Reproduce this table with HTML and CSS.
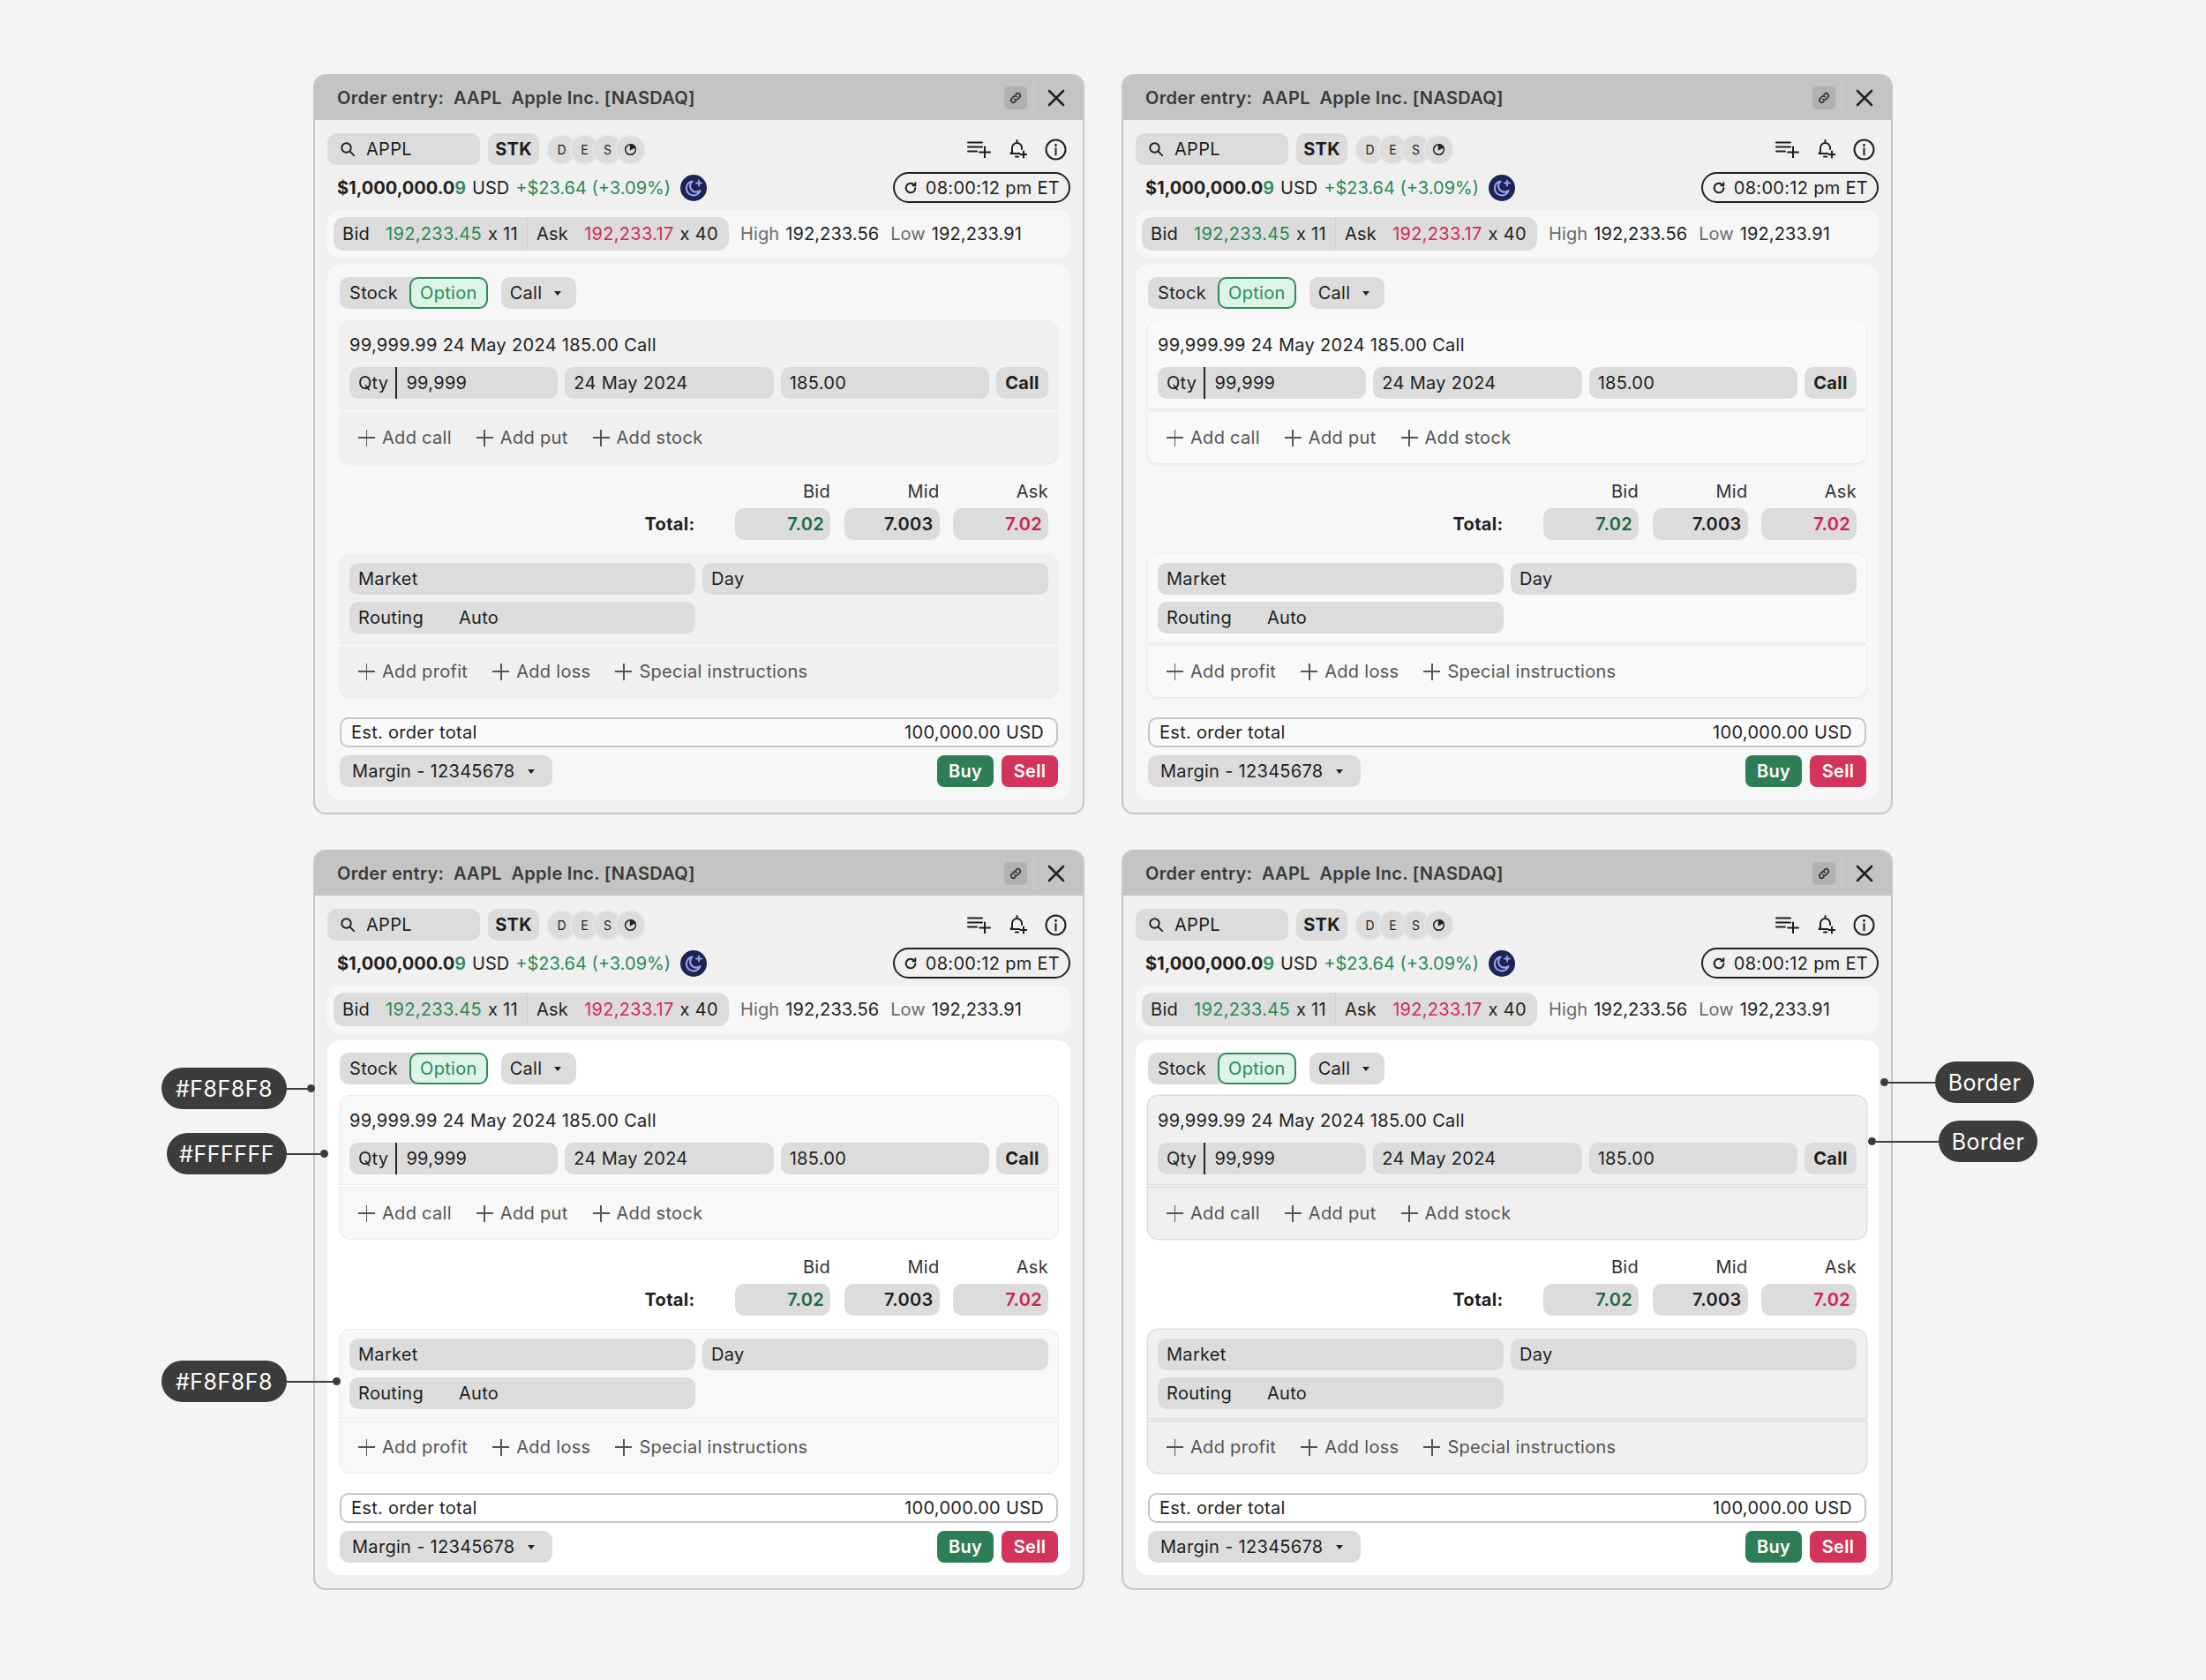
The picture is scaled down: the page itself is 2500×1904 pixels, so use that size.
FILE: index.html
```html
<!DOCTYPE html>
<html lang="en">
<head>
<meta charset="utf-8">
<title>Order entry variants</title>
<link rel="stylesheet" href="styles.css">
</head>
<body>
<main class="page">

<!-- PANEL A -->
<section class="panel v-a">
  <header class="ph">
    <div class="ph-title">Order entry:&nbsp; AAPL&nbsp; Apple Inc. [NASDAQ]</div>
    <div class="ph-actions">
      <span class="ph-link"><svg width="16" height="16" viewBox="0 0 24 24" fill="none" stroke="#333" stroke-width="2.4" stroke-linecap="round"><path d="M10 14a4 4 0 0 0 5.66 0l3-3a4 4 0 0 0-5.66-5.66l-1 1"/><path d="M14 10a4 4 0 0 0-5.66 0l-3 3a4 4 0 0 0 5.66 5.66l1-1"/></svg></span>
      <span class="ph-sep"></span>
      <span class="ph-close"><svg width="20" height="20" viewBox="0 0 20 20" stroke="#222" stroke-width="2.6" stroke-linecap="round"><path d="M2 2L18 18M18 2L2 18"/></svg></span>
    </div>
  </header>
  <div class="pb">
    <div class="row1">
      <div class="search"><svg width="18" height="18" viewBox="0 0 24 24" fill="none" stroke="#222" stroke-width="2.6" stroke-linecap="round"><circle cx="10" cy="10" r="7"/><path d="M15.5 15.5L21.5 21.5"/></svg><span>APPL</span></div>
      <div class="stk">STK</div>
      <div class="deso"><span>D</span><span>E</span><span>S</span><span><svg width="15" height="15" viewBox="0 0 16 16" fill="none" stroke="#222" stroke-width="1.6"><circle cx="8" cy="8" r="6.2"/><path d="M8 8V1.8A6.2 6.2 0 0 1 13.4 5Z" fill="#222"/></svg></span></div>
      <div class="tools">
        <svg width="27" height="19" viewBox="0 0 27 19" fill="none" stroke="#1e1e1e" stroke-width="2" stroke-linecap="round"><path d="M1 1.5H17M1 6.5H17M1 11.5H11M20 6.5V18.5M14 12.5H26"/></svg>
        <svg width="21" height="22" viewBox="0 0 21 22" fill="none" stroke="#1e1e1e" stroke-width="2" stroke-linecap="round" stroke-linejoin="round"><path d="M9.5 1V3"/><path d="M12.5 16H2.5L4 14.2V9.5a5.5 5.5 0 0 1 11 0V11"/><path d="M8 19.5h3"/><path d="M17 13.5V20.5M13.5 17H20.5"/></svg>
        <svg width="25" height="25" viewBox="0 0 25 25" fill="none" stroke="#1e1e1e" stroke-width="2"><circle cx="12.5" cy="12.5" r="11"/><path d="M12.5 11V18.5" stroke-linecap="round"/><circle cx="12.5" cy="7.5" r="0.6" fill="#1e1e1e" stroke-width="1.6"/></svg>
      </div>
    </div>
    <div class="row2">
      <div class="bal"><b>$1,000,000.0<span class="gn">9</span></b><span class="usd">USD</span><span class="gn chg">+$23.64 (+3.09%)</span><span class="moon"><svg width="30" height="30" viewBox="0 0 30 30"><circle cx="15" cy="15" r="15" fill="#1c2452"/><path d="M13.5 7.5a8 8 0 1 0 9 10.5a6.3 6.3 0 0 1-9-10.5z" fill="none" stroke="#9aa4f2" stroke-width="2.2" stroke-linejoin="round"/><path d="M21 6.5V12.5M18 9.5H24" stroke="#9aa4f2" stroke-width="1.8" stroke-linecap="round"/></svg></span></div>
      <div class="time"><svg width="16" height="16" viewBox="0 0 24 24" fill="none" stroke="#1e1e1e" stroke-width="3" stroke-linecap="round" stroke-linejoin="round"><path d="M20 12a8 8 0 1 1-2.5-5.8"/><path d="M20 3.5V8h-4.5"/></svg><span>08:00:12 pm ET</span></div>
    </div>
    <div class="quotes">
      <div class="ba">
        <span class="q q1"><span class="ql">Bid</span><span class="gn">192,233.45</span><span class="qx">x 11</span></span>
        <span class="q"><span class="ql">Ask</span><span class="rd">192,233.17</span><span class="qx">x 40</span></span>
      </div>
      <span class="hl"><span class="lbl">High</span>192,233.56</span>
      <span class="hl"><span class="lbl">Low</span>192,233.91</span>
    </div>
    <div class="card">
      <div class="segrow">
        <div class="seg"><span class="seg-off">Stock</span><span class="seg-on">Option</span></div>
        <div class="dd dd-call">Call<i class="caret"></i></div>
      </div>
      <div class="grp">
        <div class="box top leg">
          <div class="leg-title">99,999.99 24 May 2024 185.00 Call</div>
          <div class="leg-inputs">
            <div class="inp qty"><span class="qtyl">Qty</span><span class="qtyv">99,999</span></div>
            <div class="inp">24 May 2024</div>
            <div class="inp">185.00</div>
            <div class="inp callb">Call</div>
          </div>
        </div>
        <div class="box bot adds">
          <span class="add"><i class="plus"></i>Add call</span>
          <span class="add"><i class="plus"></i>Add put</span>
          <span class="add"><i class="plus"></i>Add stock</span>
        </div>
      </div>
      <div class="totals">
        <span class="th c2">Bid</span><span class="th c3">Mid</span><span class="th c4">Ask</span>
        <span class="tl">Total:</span><span class="tv tg">7.02</span><span class="tv">7.003</span><span class="tv tr">7.02</span>
      </div>
      <div class="grp grp2">
        <div class="box top ord">
          <div class="inp">Market</div>
          <div class="inp">Day</div>
          <div class="inp"><span class="rl">Routing</span>Auto</div>
        </div>
        <div class="box bot adds">
          <span class="add"><i class="plus"></i>Add profit</span>
          <span class="add"><i class="plus"></i>Add loss</span>
          <span class="add"><i class="plus"></i>Special instructions</span>
        </div>
      </div>
      <div class="est"><span>Est. order total</span><span>100,000.00 USD</span></div>
      <div class="foot">
        <div class="dd dd-margin">Margin - 12345678<i class="caret"></i></div>
        <div class="bs"><span class="btn buy">Buy</span><span class="btn sell">Sell</span></div>
      </div>
    </div>
  </div>
</section>

<!-- PANEL B -->
<section class="panel v-b">
  <header class="ph">
    <div class="ph-title">Order entry:&nbsp; AAPL&nbsp; Apple Inc. [NASDAQ]</div>
    <div class="ph-actions">
      <span class="ph-link"><svg width="16" height="16" viewBox="0 0 24 24" fill="none" stroke="#333" stroke-width="2.4" stroke-linecap="round"><path d="M10 14a4 4 0 0 0 5.66 0l3-3a4 4 0 0 0-5.66-5.66l-1 1"/><path d="M14 10a4 4 0 0 0-5.66 0l-3 3a4 4 0 0 0 5.66 5.66l1-1"/></svg></span>
      <span class="ph-sep"></span>
      <span class="ph-close"><svg width="20" height="20" viewBox="0 0 20 20" stroke="#222" stroke-width="2.6" stroke-linecap="round"><path d="M2 2L18 18M18 2L2 18"/></svg></span>
    </div>
  </header>
  <div class="pb">
    <div class="row1">
      <div class="search"><svg width="18" height="18" viewBox="0 0 24 24" fill="none" stroke="#222" stroke-width="2.6" stroke-linecap="round"><circle cx="10" cy="10" r="7"/><path d="M15.5 15.5L21.5 21.5"/></svg><span>APPL</span></div>
      <div class="stk">STK</div>
      <div class="deso"><span>D</span><span>E</span><span>S</span><span><svg width="15" height="15" viewBox="0 0 16 16" fill="none" stroke="#222" stroke-width="1.6"><circle cx="8" cy="8" r="6.2"/><path d="M8 8V1.8A6.2 6.2 0 0 1 13.4 5Z" fill="#222"/></svg></span></div>
      <div class="tools">
        <svg width="27" height="19" viewBox="0 0 27 19" fill="none" stroke="#1e1e1e" stroke-width="2" stroke-linecap="round"><path d="M1 1.5H17M1 6.5H17M1 11.5H11M20 6.5V18.5M14 12.5H26"/></svg>
        <svg width="21" height="22" viewBox="0 0 21 22" fill="none" stroke="#1e1e1e" stroke-width="2" stroke-linecap="round" stroke-linejoin="round"><path d="M9.5 1V3"/><path d="M12.5 16H2.5L4 14.2V9.5a5.5 5.5 0 0 1 11 0V11"/><path d="M8 19.5h3"/><path d="M17 13.5V20.5M13.5 17H20.5"/></svg>
        <svg width="25" height="25" viewBox="0 0 25 25" fill="none" stroke="#1e1e1e" stroke-width="2"><circle cx="12.5" cy="12.5" r="11"/><path d="M12.5 11V18.5" stroke-linecap="round"/><circle cx="12.5" cy="7.5" r="0.6" fill="#1e1e1e" stroke-width="1.6"/></svg>
      </div>
    </div>
    <div class="row2">
      <div class="bal"><b>$1,000,000.0<span class="gn">9</span></b><span class="usd">USD</span><span class="gn chg">+$23.64 (+3.09%)</span><span class="moon"><svg width="30" height="30" viewBox="0 0 30 30"><circle cx="15" cy="15" r="15" fill="#1c2452"/><path d="M13.5 7.5a8 8 0 1 0 9 10.5a6.3 6.3 0 0 1-9-10.5z" fill="none" stroke="#9aa4f2" stroke-width="2.2" stroke-linejoin="round"/><path d="M21 6.5V12.5M18 9.5H24" stroke="#9aa4f2" stroke-width="1.8" stroke-linecap="round"/></svg></span></div>
      <div class="time"><svg width="16" height="16" viewBox="0 0 24 24" fill="none" stroke="#1e1e1e" stroke-width="3" stroke-linecap="round" stroke-linejoin="round"><path d="M20 12a8 8 0 1 1-2.5-5.8"/><path d="M20 3.5V8h-4.5"/></svg><span>08:00:12 pm ET</span></div>
    </div>
    <div class="quotes">
      <div class="ba">
        <span class="q q1"><span class="ql">Bid</span><span class="gn">192,233.45</span><span class="qx">x 11</span></span>
        <span class="q"><span class="ql">Ask</span><span class="rd">192,233.17</span><span class="qx">x 40</span></span>
      </div>
      <span class="hl"><span class="lbl">High</span>192,233.56</span>
      <span class="hl"><span class="lbl">Low</span>192,233.91</span>
    </div>
    <div class="card">
      <div class="segrow">
        <div class="seg"><span class="seg-off">Stock</span><span class="seg-on">Option</span></div>
        <div class="dd dd-call">Call<i class="caret"></i></div>
      </div>
      <div class="grp">
        <div class="box top leg">
          <div class="leg-title">99,999.99 24 May 2024 185.00 Call</div>
          <div class="leg-inputs">
            <div class="inp qty"><span class="qtyl">Qty</span><span class="qtyv">99,999</span></div>
            <div class="inp">24 May 2024</div>
            <div class="inp">185.00</div>
            <div class="inp callb">Call</div>
          </div>
        </div>
        <div class="box bot adds">
          <span class="add"><i class="plus"></i>Add call</span>
          <span class="add"><i class="plus"></i>Add put</span>
          <span class="add"><i class="plus"></i>Add stock</span>
        </div>
      </div>
      <div class="totals">
        <span class="th c2">Bid</span><span class="th c3">Mid</span><span class="th c4">Ask</span>
        <span class="tl">Total:</span><span class="tv tg">7.02</span><span class="tv">7.003</span><span class="tv tr">7.02</span>
      </div>
      <div class="grp grp2">
        <div class="box top ord">
          <div class="inp">Market</div>
          <div class="inp">Day</div>
          <div class="inp"><span class="rl">Routing</span>Auto</div>
        </div>
        <div class="box bot adds">
          <span class="add"><i class="plus"></i>Add profit</span>
          <span class="add"><i class="plus"></i>Add loss</span>
          <span class="add"><i class="plus"></i>Special instructions</span>
        </div>
      </div>
      <div class="est"><span>Est. order total</span><span>100,000.00 USD</span></div>
      <div class="foot">
        <div class="dd dd-margin">Margin - 12345678<i class="caret"></i></div>
        <div class="bs"><span class="btn buy">Buy</span><span class="btn sell">Sell</span></div>
      </div>
    </div>
  </div>
</section>

<!-- PANEL C -->
<section class="panel v-c">
  <header class="ph">
    <div class="ph-title">Order entry:&nbsp; AAPL&nbsp; Apple Inc. [NASDAQ]</div>
    <div class="ph-actions">
      <span class="ph-link"><svg width="16" height="16" viewBox="0 0 24 24" fill="none" stroke="#333" stroke-width="2.4" stroke-linecap="round"><path d="M10 14a4 4 0 0 0 5.66 0l3-3a4 4 0 0 0-5.66-5.66l-1 1"/><path d="M14 10a4 4 0 0 0-5.66 0l-3 3a4 4 0 0 0 5.66 5.66l1-1"/></svg></span>
      <span class="ph-sep"></span>
      <span class="ph-close"><svg width="20" height="20" viewBox="0 0 20 20" stroke="#222" stroke-width="2.6" stroke-linecap="round"><path d="M2 2L18 18M18 2L2 18"/></svg></span>
    </div>
  </header>
  <div class="pb">
    <div class="row1">
      <div class="search"><svg width="18" height="18" viewBox="0 0 24 24" fill="none" stroke="#222" stroke-width="2.6" stroke-linecap="round"><circle cx="10" cy="10" r="7"/><path d="M15.5 15.5L21.5 21.5"/></svg><span>APPL</span></div>
      <div class="stk">STK</div>
      <div class="deso"><span>D</span><span>E</span><span>S</span><span><svg width="15" height="15" viewBox="0 0 16 16" fill="none" stroke="#222" stroke-width="1.6"><circle cx="8" cy="8" r="6.2"/><path d="M8 8V1.8A6.2 6.2 0 0 1 13.4 5Z" fill="#222"/></svg></span></div>
      <div class="tools">
        <svg width="27" height="19" viewBox="0 0 27 19" fill="none" stroke="#1e1e1e" stroke-width="2" stroke-linecap="round"><path d="M1 1.5H17M1 6.5H17M1 11.5H11M20 6.5V18.5M14 12.5H26"/></svg>
        <svg width="21" height="22" viewBox="0 0 21 22" fill="none" stroke="#1e1e1e" stroke-width="2" stroke-linecap="round" stroke-linejoin="round"><path d="M9.5 1V3"/><path d="M12.5 16H2.5L4 14.2V9.5a5.5 5.5 0 0 1 11 0V11"/><path d="M8 19.5h3"/><path d="M17 13.5V20.5M13.5 17H20.5"/></svg>
        <svg width="25" height="25" viewBox="0 0 25 25" fill="none" stroke="#1e1e1e" stroke-width="2"><circle cx="12.5" cy="12.5" r="11"/><path d="M12.5 11V18.5" stroke-linecap="round"/><circle cx="12.5" cy="7.5" r="0.6" fill="#1e1e1e" stroke-width="1.6"/></svg>
      </div>
    </div>
    <div class="row2">
      <div class="bal"><b>$1,000,000.0<span class="gn">9</span></b><span class="usd">USD</span><span class="gn chg">+$23.64 (+3.09%)</span><span class="moon"><svg width="30" height="30" viewBox="0 0 30 30"><circle cx="15" cy="15" r="15" fill="#1c2452"/><path d="M13.5 7.5a8 8 0 1 0 9 10.5a6.3 6.3 0 0 1-9-10.5z" fill="none" stroke="#9aa4f2" stroke-width="2.2" stroke-linejoin="round"/><path d="M21 6.5V12.5M18 9.5H24" stroke="#9aa4f2" stroke-width="1.8" stroke-linecap="round"/></svg></span></div>
      <div class="time"><svg width="16" height="16" viewBox="0 0 24 24" fill="none" stroke="#1e1e1e" stroke-width="3" stroke-linecap="round" stroke-linejoin="round"><path d="M20 12a8 8 0 1 1-2.5-5.8"/><path d="M20 3.5V8h-4.5"/></svg><span>08:00:12 pm ET</span></div>
    </div>
    <div class="quotes">
      <div class="ba">
        <span class="q q1"><span class="ql">Bid</span><span class="gn">192,233.45</span><span class="qx">x 11</span></span>
        <span class="q"><span class="ql">Ask</span><span class="rd">192,233.17</span><span class="qx">x 40</span></span>
      </div>
      <span class="hl"><span class="lbl">High</span>192,233.56</span>
      <span class="hl"><span class="lbl">Low</span>192,233.91</span>
    </div>
    <div class="card">
      <div class="segrow">
        <div class="seg"><span class="seg-off">Stock</span><span class="seg-on">Option</span></div>
        <div class="dd dd-call">Call<i class="caret"></i></div>
      </div>
      <div class="grp">
        <div class="box top leg">
          <div class="leg-title">99,999.99 24 May 2024 185.00 Call</div>
          <div class="leg-inputs">
            <div class="inp qty"><span class="qtyl">Qty</span><span class="qtyv">99,999</span></div>
            <div class="inp">24 May 2024</div>
            <div class="inp">185.00</div>
            <div class="inp callb">Call</div>
          </div>
        </div>
        <div class="box bot adds">
          <span class="add"><i class="plus"></i>Add call</span>
          <span class="add"><i class="plus"></i>Add put</span>
          <span class="add"><i class="plus"></i>Add stock</span>
        </div>
      </div>
      <div class="totals">
        <span class="th c2">Bid</span><span class="th c3">Mid</span><span class="th c4">Ask</span>
        <span class="tl">Total:</span><span class="tv tg">7.02</span><span class="tv">7.003</span><span class="tv tr">7.02</span>
      </div>
      <div class="grp grp2">
        <div class="box top ord">
          <div class="inp">Market</div>
          <div class="inp">Day</div>
          <div class="inp"><span class="rl">Routing</span>Auto</div>
        </div>
        <div class="box bot adds">
          <span class="add"><i class="plus"></i>Add profit</span>
          <span class="add"><i class="plus"></i>Add loss</span>
          <span class="add"><i class="plus"></i>Special instructions</span>
        </div>
      </div>
      <div class="est"><span>Est. order total</span><span>100,000.00 USD</span></div>
      <div class="foot">
        <div class="dd dd-margin">Margin - 12345678<i class="caret"></i></div>
        <div class="bs"><span class="btn buy">Buy</span><span class="btn sell">Sell</span></div>
      </div>
    </div>
  </div>
</section>

<!-- PANEL D -->
<section class="panel v-d">
  <header class="ph">
    <div class="ph-title">Order entry:&nbsp; AAPL&nbsp; Apple Inc. [NASDAQ]</div>
    <div class="ph-actions">
      <span class="ph-link"><svg width="16" height="16" viewBox="0 0 24 24" fill="none" stroke="#333" stroke-width="2.4" stroke-linecap="round"><path d="M10 14a4 4 0 0 0 5.66 0l3-3a4 4 0 0 0-5.66-5.66l-1 1"/><path d="M14 10a4 4 0 0 0-5.66 0l-3 3a4 4 0 0 0 5.66 5.66l1-1"/></svg></span>
      <span class="ph-sep"></span>
      <span class="ph-close"><svg width="20" height="20" viewBox="0 0 20 20" stroke="#222" stroke-width="2.6" stroke-linecap="round"><path d="M2 2L18 18M18 2L2 18"/></svg></span>
    </div>
  </header>
  <div class="pb">
    <div class="row1">
      <div class="search"><svg width="18" height="18" viewBox="0 0 24 24" fill="none" stroke="#222" stroke-width="2.6" stroke-linecap="round"><circle cx="10" cy="10" r="7"/><path d="M15.5 15.5L21.5 21.5"/></svg><span>APPL</span></div>
      <div class="stk">STK</div>
      <div class="deso"><span>D</span><span>E</span><span>S</span><span><svg width="15" height="15" viewBox="0 0 16 16" fill="none" stroke="#222" stroke-width="1.6"><circle cx="8" cy="8" r="6.2"/><path d="M8 8V1.8A6.2 6.2 0 0 1 13.4 5Z" fill="#222"/></svg></span></div>
      <div class="tools">
        <svg width="27" height="19" viewBox="0 0 27 19" fill="none" stroke="#1e1e1e" stroke-width="2" stroke-linecap="round"><path d="M1 1.5H17M1 6.5H17M1 11.5H11M20 6.5V18.5M14 12.5H26"/></svg>
        <svg width="21" height="22" viewBox="0 0 21 22" fill="none" stroke="#1e1e1e" stroke-width="2" stroke-linecap="round" stroke-linejoin="round"><path d="M9.5 1V3"/><path d="M12.5 16H2.5L4 14.2V9.5a5.5 5.5 0 0 1 11 0V11"/><path d="M8 19.5h3"/><path d="M17 13.5V20.5M13.5 17H20.5"/></svg>
        <svg width="25" height="25" viewBox="0 0 25 25" fill="none" stroke="#1e1e1e" stroke-width="2"><circle cx="12.5" cy="12.5" r="11"/><path d="M12.5 11V18.5" stroke-linecap="round"/><circle cx="12.5" cy="7.5" r="0.6" fill="#1e1e1e" stroke-width="1.6"/></svg>
      </div>
    </div>
    <div class="row2">
      <div class="bal"><b>$1,000,000.0<span class="gn">9</span></b><span class="usd">USD</span><span class="gn chg">+$23.64 (+3.09%)</span><span class="moon"><svg width="30" height="30" viewBox="0 0 30 30"><circle cx="15" cy="15" r="15" fill="#1c2452"/><path d="M13.5 7.5a8 8 0 1 0 9 10.5a6.3 6.3 0 0 1-9-10.5z" fill="none" stroke="#9aa4f2" stroke-width="2.2" stroke-linejoin="round"/><path d="M21 6.5V12.5M18 9.5H24" stroke="#9aa4f2" stroke-width="1.8" stroke-linecap="round"/></svg></span></div>
      <div class="time"><svg width="16" height="16" viewBox="0 0 24 24" fill="none" stroke="#1e1e1e" stroke-width="3" stroke-linecap="round" stroke-linejoin="round"><path d="M20 12a8 8 0 1 1-2.5-5.8"/><path d="M20 3.5V8h-4.5"/></svg><span>08:00:12 pm ET</span></div>
    </div>
    <div class="quotes">
      <div class="ba">
        <span class="q q1"><span class="ql">Bid</span><span class="gn">192,233.45</span><span class="qx">x 11</span></span>
        <span class="q"><span class="ql">Ask</span><span class="rd">192,233.17</span><span class="qx">x 40</span></span>
      </div>
      <span class="hl"><span class="lbl">High</span>192,233.56</span>
      <span class="hl"><span class="lbl">Low</span>192,233.91</span>
    </div>
    <div class="card">
      <div class="segrow">
        <div class="seg"><span class="seg-off">Stock</span><span class="seg-on">Option</span></div>
        <div class="dd dd-call">Call<i class="caret"></i></div>
      </div>
      <div class="grp">
        <div class="box top leg">
          <div class="leg-title">99,999.99 24 May 2024 185.00 Call</div>
          <div class="leg-inputs">
            <div class="inp qty"><span class="qtyl">Qty</span><span class="qtyv">99,999</span></div>
            <div class="inp">24 May 2024</div>
            <div class="inp">185.00</div>
            <div class="inp callb">Call</div>
          </div>
        </div>
        <div class="box bot adds">
          <span class="add"><i class="plus"></i>Add call</span>
          <span class="add"><i class="plus"></i>Add put</span>
          <span class="add"><i class="plus"></i>Add stock</span>
        </div>
      </div>
      <div class="totals">
        <span class="th c2">Bid</span><span class="th c3">Mid</span><span class="th c4">Ask</span>
        <span class="tl">Total:</span><span class="tv tg">7.02</span><span class="tv">7.003</span><span class="tv tr">7.02</span>
      </div>
      <div class="grp grp2">
        <div class="box top ord">
          <div class="inp">Market</div>
          <div class="inp">Day</div>
          <div class="inp"><span class="rl">Routing</span>Auto</div>
        </div>
        <div class="box bot adds">
          <span class="add"><i class="plus"></i>Add profit</span>
          <span class="add"><i class="plus"></i>Add loss</span>
          <span class="add"><i class="plus"></i>Special instructions</span>
        </div>
      </div>
      <div class="est"><span>Est. order total</span><span>100,000.00 USD</span></div>
      <div class="foot">
        <div class="dd dd-margin">Margin - 12345678<i class="caret"></i></div>
        <div class="bs"><span class="btn buy">Buy</span><span class="btn sell">Sell</span></div>
      </div>
    </div>
  </div>
</section>

</main>

<div class="ann ann-l a1"><span class="pill">#F8F8F8</span><span class="ln"></span><span class="dot"></span></div>
<div class="ann ann-l a2"><span class="pill">#FFFFFF</span><span class="ln"></span><span class="dot"></span></div>
<div class="ann ann-l a3"><span class="pill">#F8F8F8</span><span class="ln"></span><span class="dot"></span></div>
<div class="ann ann-r a4"><span class="dot"></span><span class="ln"></span><span class="pill">Border</span></div>
<div class="ann ann-r a5"><span class="dot"></span><span class="ln"></span><span class="pill">Border</span></div>
</body>
</html>
```

FILE: styles.css
```css
* { box-sizing: border-box; margin: 0; padding: 0; }
html, body { width: 2500px; height: 1904px; }
body {
  background: #f4f4f4;
  font-family: Inter, "Noto Sans", sans-serif;
  font-size: 20px;
  letter-spacing: 0.3px;
  color: #1f1f1f;
  position: relative;
  overflow: hidden;
}
.page {
  display: grid;
  grid-template-columns: 874px 874px;
  column-gap: 42px;
  row-gap: 40px;
  justify-content: center;
  padding-top: 84px;
}

/* panel */
.panel {
  border: 2px solid #c6c6c6;
  border-radius: 14px;
  background: #f0f0f0;
  overflow: hidden;
}
.ph {
  height: 50px;
  background: #c4c4c4;
  display: flex;
  align-items: center;
  justify-content: space-between;
  padding: 0 20px 0 25px;
}
.ph-title { font-weight: 600; font-size: 20px; color: #3a3a3a; }
.ph-actions { display: flex; align-items: center; }
.ph-link {
  width: 26px; height: 26px; border-radius: 5px; background: #b1b1b1;
  display: flex; align-items: center; justify-content: center;
}
.ph-sep { width: 1px; height: 36px; background: #d0d0d0; margin: 0 15px 0 7px; }
.ph-close { display: flex; }

.pb { padding: 15px 14px; display: flex; flex-direction: column; gap: 8px; }

/* row 1 */
.row1 { height: 36px; display: flex; align-items: center; }
.search {
  width: 173px; height: 36px; background: #dcdcdc; border-radius: 10px;
  display: flex; align-items: center; gap: 12px; padding-left: 14px;
}
.stk {
  margin-left: 9px; width: 58px; height: 36px; background: #dcdcdc; border-radius: 10px;
  font-weight: 700; display: flex; align-items: center; justify-content: center;
}
.deso { margin-left: 10px; display: flex; }
.deso span {
  width: 31px; height: 31px; border-radius: 50%; background: #dcdcdc;
  box-shadow: 0 0 0 1.5px #e8e8e8; margin-left: -5px;
  display: flex; align-items: center; justify-content: center; font-size: 14px; letter-spacing: 0;
  position: relative;
}
.deso span:first-child { margin-left: 0; }
.tools { margin-left: auto; display: flex; align-items: center; gap: 20px; padding-right: 4px; }

/* row 2 */
.row2 { height: 35px; display: flex; align-items: center; justify-content: space-between; }
.bal { padding-left: 11px; display: flex; align-items: center; letter-spacing: 0; }
.bal b { font-weight: 700; }
.bal .gn { color: #2b8a57; }
.bal b .gn { font-weight: 600; }
.usd { margin-left: 7px; }
.chg { margin-left: 7px; }
.moon { margin-left: 11px; display: flex; }
.time {
  height: 35px; border: 2px solid #222; border-radius: 18px;
  display: flex; align-items: center; gap: 9px; padding: 0 10px 0 10px;
}

/* quotes */
.quotes {
  height: 54px; background: #f7f7f7; border-radius: 14px; padding: 0 7px;
  display: flex; align-items: center;
}
.ba { height: 38px; width: 448px; background: #dcdcdc; border-radius: 12px; display: flex; align-items: center; }
.q { display: flex; align-items: center; height: 100%; padding: 0 10px; }
.q1 { border-right: 1.5px solid #cfcfcf; }
.ql { margin-right: 18px; }
.qx { margin-left: 7px; }
.gn { color: #2b8a57; }
.rd { color: #d42a5b; }
.hl { margin-left: 13px; letter-spacing: 0.1px; }
.lbl { color: #6b6b6b; margin-right: 7px; }

/* card */
.card { border-radius: 14px; padding: 14px; display: flex; flex-direction: column; }
.segrow { height: 36px; display: flex; align-items: center; gap: 15px; }
.seg { height: 36px; background: #dcdcdc; border-radius: 10px; display: flex; align-items: center; }
.seg-off { padding: 0 13px 0 11px; }
.seg-on {
  height: 36px; padding: 0 10px; border: 2px solid #2e8b5a; border-radius: 10px;
  background: #ddf5e8; color: #2b8a57; display: flex; align-items: center;
}
.dd {
  height: 36px; background: #dcdcdc; border-radius: 10px; display: flex; align-items: center;
}
.dd-call { width: 85px; padding-left: 10px; }
.caret {
  display: inline-block; width: 0; height: 0;
  border-left: 4.5px solid transparent; border-right: 4.5px solid transparent; border-top: 5px solid #222;
}
.dd-call .caret { margin-left: 14px; }
.dd-margin { width: 241px; padding-left: 14px; }
.dd-margin .caret { margin-left: 14px; }

.grp { margin-top: 13px; display: flex; flex-direction: column; gap: 4px; }
.grp2 { margin-top: 16px; }
.box.top { border-radius: 12px 12px 0 0; }
.box.bot { border-radius: 0 0 12px 12px; }
.leg { padding: 16px 11px 11px; }
.leg-title { line-height: 24px; }
.leg-inputs { margin-top: 13px; display: grid; grid-template-columns: 1fr 1fr 1fr 59px; gap: 8px; }
.inp {
  height: 36px; background: #dcdcdc; border-radius: 10px; display: flex; align-items: center; padding-left: 10px;
}
.qty { padding-left: 0; }
.qtyl { padding: 0 8px 0 10px; height: 100%; display: flex; align-items: center; border-right: 2px solid #222; }
.qtyv { padding-left: 10px; }
.callb { font-weight: 700; padding-left: 0; justify-content: center; }

.adds { height: 58px; display: flex; align-items: center; padding-left: 21px; gap: 28px; color: #555; }
.add { display: flex; align-items: center; gap: 8px; }
.plus { display: inline-block; width: 19px; height: 19px; position: relative; }
.plus::before, .plus::after { content: ""; position: absolute; background: #555; }
.plus::before { left: 0; right: 0; top: 8.5px; height: 1.8px; }
.plus::after { top: 0; bottom: 0; left: 8.6px; width: 1.8px; }

.totals {
  margin-top: 21px; display: grid; grid-template-columns: 1fr 108px 108px 108px;
  grid-template-rows: 22px 36px; column-gap: 15.5px; row-gap: 8px; padding-right: 11px;
}
.th { text-align: right; line-height: 22px; color: #333; }
.c2 { grid-column: 2; } .c3 { grid-column: 3; } .c4 { grid-column: 4; }
.tl { grid-column: 1; grid-row: 2; justify-self: end; align-self: center; font-weight: 700; margin-right: 30px; }
.tv {
  grid-row: 2; background: #dcdcdc; border-radius: 10px; display: flex; align-items: center;
  justify-content: flex-end; padding-right: 7px; font-weight: 600;
}
.tg { color: #1f6a46; }
.tr { color: #d01f55; }

.ord { padding: 10px 11px; display: grid; grid-template-columns: 1fr 1fr; grid-template-rows: 36px 36px; gap: 8px; }
.rl { margin-right: 40px; }

.est {
  margin-top: 23px; height: 34px; border: 2px solid #c5c5c5; border-radius: 10px; background: #fafafa;
  display: flex; align-items: center; justify-content: space-between; padding: 0 14px 0 11px;
}
.foot { margin-top: 9px; height: 36px; display: flex; align-items: center; justify-content: space-between; }
.bs { display: flex; gap: 9px; }
.btn {
  width: 64px; height: 36px; border-radius: 8px; color: #fff; font-weight: 600;
  display: flex; align-items: center; justify-content: center;
}
.buy { background: #2d7e57; }
.sell { background: #d3345c; }

/* variants */
.v-a .card { background: #f7f7f7; }
.v-a .box { background: #f0f0f0; box-shadow: 0 1px 3px rgba(0,0,0,0.08); }
.v-b .card { background: #f7f7f7; }
.v-b .box { background: #f9f9f9; box-shadow: 0 1px 4px rgba(0,0,0,0.09); }
.v-c .card { background: #ffffff; }
.v-c .box { background: #f8f8f8; box-shadow: 0 0 0 1px #ececec; }
.v-c .est { background: #fff; }
.v-d .card { background: #ffffff; }
.v-d .box { background: #f0f0f0; box-shadow: 0 0 0 1.5px #dedede; }
.v-d .est { background: #fff; }

/* annotations */
.ann { position: absolute; display: flex; align-items: center; height: 47px; letter-spacing: 0.5px; }
.pill {
  height: 47px; border-radius: 24px; background: #3c3c3c; color: #fff;
  font-size: 25px; display: flex; align-items: center; justify-content: center;
}
.ln { height: 2px; background: #3c3c3c; }
.dot { width: 9px; height: 9px; border-radius: 50%; background: #3c3c3c; }
.a1 { left: 183px; top: 1210px; }
.a1 .pill { width: 142px; } .a1 .ln { width: 23px; }
.a2 { left: 189px; top: 1284px; }
.a2 .pill { width: 136px; } .a2 .ln { width: 38px; }
.a3 { left: 183px; top: 1542px; }
.a3 .pill { width: 142px; } .a3 .ln { width: 52px; }
.a4 { left: 2131px; top: 1203px; }
.a4 .ln { width: 53px; } .a4 .pill { width: 112px; }
.a5 { left: 2117px; top: 1270px; }
.a5 .ln { width: 71px; } .a5 .pill { width: 112px; }
```
